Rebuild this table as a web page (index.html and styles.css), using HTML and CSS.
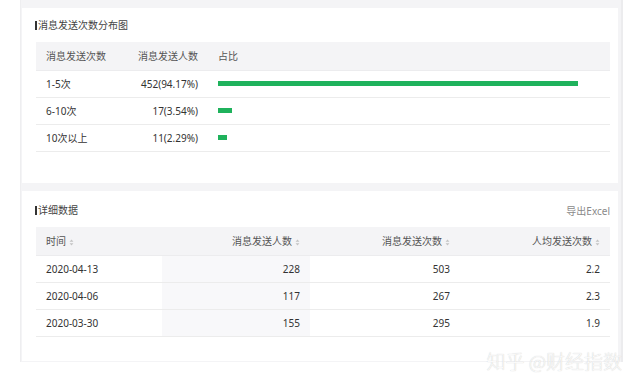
FILE: index.html
```html
<!DOCTYPE html>
<html lang="zh">
<head>
<meta charset="utf-8">
<link rel="stylesheet" href="styles.css">
</head>
<body>
<div class="frame">
  <section class="panel panel-dist">
    <div class="panel-head"><h2 class="title">消息发送次数分布图</h2></div>
    <table class="tbl tbl-dist">
      <colgroup><col class="c1"><col class="c2"><col></colgroup>
      <thead>
        <tr><th>消息发送次数</th><th class="r">消息发送人数</th><th>占比</th></tr>
      </thead>
      <tbody>
        <tr><td>1-5次</td><td class="r">452(94.17%)</td><td><div class="track"><div class="bar" style="width:94.17%"></div></div></td></tr>
        <tr><td>6-10次</td><td class="r">17(3.54%)</td><td><div class="track"><div class="bar" style="width:3.54%"></div></div></td></tr>
        <tr><td>10次以上</td><td class="r">11(2.29%)</td><td><div class="track"><div class="bar" style="width:2.29%"></div></div></td></tr>
      </tbody>
    </table>
  </section>
  <section class="panel panel-detail">
    <div class="panel-head"><h2 class="title">详细数据</h2><a class="export">导出Excel</a></div>
    <table class="tbl tbl-detail">
      <colgroup><col class="d1"><col class="d2"><col class="d3"><col></colgroup>
      <thead>
        <tr>
          <th>时间<svg class="sort" viewBox="0 0 6 9"><path d="M3 0.5 L5.5 3.5 H0.5 Z M3 8.5 L5.5 5.5 H0.5 Z"/></svg></th>
          <th class="r">消息发送人数<svg class="sort" viewBox="0 0 6 9"><path d="M3 0.5 L5.5 3.5 H0.5 Z M3 8.5 L5.5 5.5 H0.5 Z"/></svg></th>
          <th class="r">消息发送次数<svg class="sort" viewBox="0 0 6 9"><path d="M3 0.5 L5.5 3.5 H0.5 Z M3 8.5 L5.5 5.5 H0.5 Z"/></svg></th>
          <th class="r">人均发送次数<svg class="sort" viewBox="0 0 6 9"><path d="M3 0.5 L5.5 3.5 H0.5 Z M3 8.5 L5.5 5.5 H0.5 Z"/></svg></th>
        </tr>
      </thead>
      <tbody>
        <tr><td>2020-04-13</td><td class="r shade">228</td><td class="r">503</td><td class="r">2.2</td></tr>
        <tr><td>2020-04-06</td><td class="r shade">117</td><td class="r">267</td><td class="r">2.3</td></tr>
        <tr><td>2020-03-30</td><td class="r shade">155</td><td class="r">295</td><td class="r">1.9</td></tr>
      </tbody>
    </table>
  </section>
  <div class="watermark">知乎 @财经指数</div>
</div>
</body>
</html>
```
FILE: styles.css
```css
html, body {
  margin: 0;
  padding: 0;
  background: #ffffff;
}
body {
  font-family: "Noto Sans", "Noto Sans CJK SC", sans-serif;
  font-size: 10px;
  color: #333;
  width: 640px;
  height: 377px;
  overflow: hidden;
}
.frame {
  position: relative;
  margin-left: 20px;
  width: 603px;
  height: 362px;
  box-sizing: border-box;
  padding: 8px 0 0 1px;
  background: #f4f4f6;
  border-left: 1px solid #eeeef0;
  border-right: 2px solid #ececee;
}
.panel {
  background: #fff;
  width: 596px;
  box-sizing: border-box;
  padding: 0 8px 0 14px;
}
.panel-dist {
  height: 175px;
  padding-top: 10px;
}
.panel-detail {
  margin-top: 8px;
  height: 170px;
  padding-top: 12px;
}
.panel-head {
  display: flex;
  align-items: center;
  justify-content: space-between;
  height: 14px;
  margin-bottom: 10px;
}
.title {
  margin: 0 0 0 -1px;
  font-size: 10px;
  font-weight: normal;
  color: #444;
  display: flex;
  align-items: center;
  line-height: 14px;
}
.title::before {
  content: "";
  display: inline-block;
  width: 2px;
  height: 9px;
  background: #333;
  margin-right: 1px;
}
.export {
  color: #8a8a8a;
  font-size: 10px;
}
.tbl {
  width: 574px;
  border-collapse: collapse;
  table-layout: fixed;
}
.tbl th {
  background: #f4f4f6;
  height: 28px;
  padding: 0 10px;
  font-weight: normal;
  color: #555;
  text-align: left;
  white-space: nowrap;
  border-bottom: 1px solid #ececee;
  box-sizing: border-box;
}
.tbl td {
  height: 27px;
  padding: 0 10px;
  border-bottom: 1px solid #ececec;
  box-sizing: border-box;
  color: #333;
  white-space: nowrap;
}
.tbl .r {
  text-align: right;
}
.tbl-dist th.r,
.tbl-dist td.r {
  padding-left: 0;
}
.c1 { width: 94px; }
.c2 { width: 78px; }
.d1 { width: 126px; }
.d2 { width: 148px; }
.d3 { width: 150px; }
.track {
  width: 382px;
  height: 5px;
}
.bar {
  height: 100%;
  background: #1fb25c;
}
.shade {
  background: #f8f8fa;
}
.sort {
  width: 5px;
  height: 7px;
  margin-left: 3px;
  vertical-align: -1px;
  fill: #c4c4c4;
}
.watermark {
  position: absolute;
  right: -1px;
  bottom: -11px;
  font-family: "Noto Sans CJK SC", sans-serif;
  font-size: 19px;
  font-weight: 300;
  color: #fafafa;
  text-shadow: 0 0 1px #c2c2c2;
  line-height: 24px;
}
```
